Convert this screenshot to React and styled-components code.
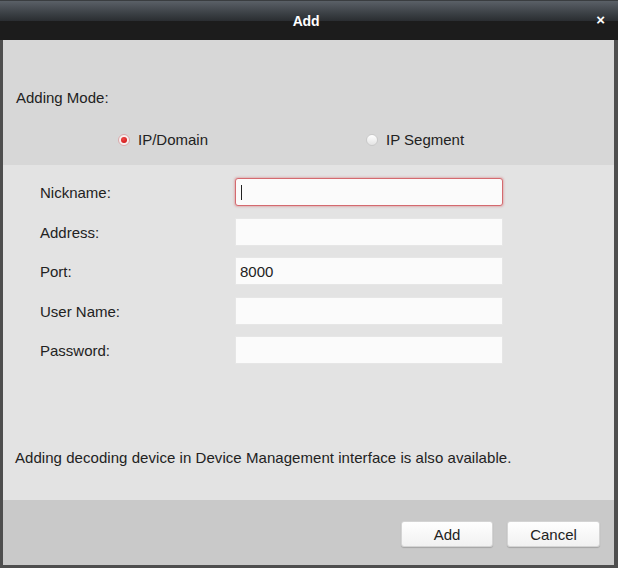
import React from 'react';
import styled, { createGlobalStyle } from 'styled-components';

const GlobalStyle = createGlobalStyle`
  html, body {
    margin: 0;
    padding: 0;
    background: #ffffff;
  }
  body {
    font-family: "Liberation Sans", Arial, sans-serif;
  }
`;

const Window = styled.div`
  width: 618px;
  height: 568px;
  box-sizing: border-box;
  display: flex;
  flex-direction: column;
  border: 3px solid #4e4e4e;
  border-right-width: 4px;
  border-top: none;
  background: #e3e3e3;
`;

const TitleBar = styled.div`
  height: 40px;
  margin: 0 -4px 0 -3px;
  padding-right: 6px;
  position: relative;
  display: flex;
  align-items: center;
  justify-content: center;
  background: linear-gradient(
    to bottom,
    #5a6067 0px,
    #3c4146 12px,
    #2a2d31 20px,
    #1c1c1c 20px,
    #1c1c1c 100%
  );
  border-top: 1px solid #3a3d40;
  box-sizing: border-box;
`;

const Title = styled.div`
  color: #ffffff;
  font-weight: bold;
  font-size: 14px;
  letter-spacing: -0.2px;
`;

const CloseButton = styled.div`
  position: absolute;
  right: 13px;
  top: 11px;
  color: #ffffff;
  font-weight: bold;
  font-size: 15px;
  line-height: 16px;
  cursor: pointer;
`;

const ModeSection = styled.div`
  height: 125px;
  box-sizing: border-box;
  background: #d7d7d7;
  padding: 50px 0 0 13px;
  display: flex;
  flex-direction: column;
`;

const Text = styled.div`
  color: #222222;
  font-size: 15px;
  line-height: 16px;
  padding-top: ${p => (p.shift ? `${p.shift}px` : '0')};
`;

const RadioRow = styled.div`
  display: flex;
  margin-top: 26px;
  padding-left: 102px;
`;

const RadioOption = styled.label`
  display: flex;
  align-items: center;
  gap: 8px;
  width: 250px;
  color: #222222;
  font-size: 15px;
  line-height: 16px;
  cursor: pointer;
`;

const RadioDot = styled.span`
  width: 12px;
  height: 12px;
  border-radius: 50%;
  box-sizing: border-box;
  display: flex;
  align-items: center;
  justify-content: center;
  background: ${p => (p.checked ? '#f7eeee' : 'linear-gradient(#ffffff, #e4e4e4)')};
  border: 1px solid ${p => (p.checked ? '#d9a9ab' : '#c9c9c9')};

  &::after {
    content: '';
    width: 6px;
    height: 6px;
    border-radius: 50%;
    background: radial-gradient(circle at 40% 35%, #f04848, #c80c0c);
    display: ${p => (p.checked ? 'block' : 'none')};
  }
`;

const FormSection = styled.div`
  flex: 1;
  padding: 13px 0 0 37px;
  display: flex;
  flex-direction: column;
`;

const Fields = styled.div`
  display: flex;
  flex-direction: column;
  gap: 11.5px;
`;

const FieldRow = styled.div`
  display: grid;
  grid-template-columns: 195px 268px;
  align-items: center;
`;

const Input = styled.input`
  height: 28px;
  box-sizing: border-box;
  padding: 0 4px;
  font-family: "Liberation Sans", Arial, sans-serif;
  font-size: 15px;
  color: #222222;
  background: #fbfbfb;
  border: 1px solid ${p => (p.focused ? '#d46a6f' : '#e6e6e6')};
  border-radius: ${p => (p.focused ? '3px' : '1px')};
  box-shadow: ${p => (p.focused ? '0 0 2px 1px rgba(214, 120, 124, 0.45)' : 'none')};
  outline: none;
`;

const Caret = styled.span`
  position: absolute;
  left: 6px;
  top: 7px;
  width: 1px;
  height: 15px;
  background: #222222;
`;

const InputWrap = styled.div`
  position: relative;
  display: flex;
  flex-direction: column;
`;

const Note = styled.div`
  margin-top: 86px;
  margin-left: -25px;
  color: #222222;
  font-size: 15px;
  line-height: 16px;
  letter-spacing: 0.05px;
`;

const Footer = styled.div`
  height: 65px;
  box-sizing: border-box;
  background: #c9c9c9;
  display: flex;
  justify-content: flex-end;
  align-items: flex-start;
  gap: 14px;
  padding: 21px 14px 0 0;
`;

const Button = styled.button`
  width: ${p => p.w}px;
  height: 26px;
  font-family: "Liberation Sans", Arial, sans-serif;
  font-size: 15px;
  color: #222222;
  background: linear-gradient(#ffffff, #f1f1f1);
  border: 1px solid #d4d4d4;
  border-radius: 3px;
  box-shadow: 0 1px 1px rgba(0, 0, 0, 0.18);
  cursor: pointer;
`;

const fields = [
  { label: 'Nickname:', value: '', focused: true },
  { label: 'Address:', value: '' },
  { label: 'Port:', value: '8000' },
  { label: 'User Name:', value: '' },
  { label: 'Password:', value: '' },
];

export default function App() {
  return (
    <>
      <GlobalStyle />
      <Window>
        <TitleBar>
          <Title>Add</Title>
          <CloseButton>×</CloseButton>
        </TitleBar>

        <ModeSection>
          <Text>Adding Mode:</Text>
          <RadioRow>
            <RadioOption>
              <RadioDot checked />
              IP/Domain
            </RadioOption>
            <RadioOption>
              <RadioDot />
              IP Segment
            </RadioOption>
          </RadioRow>
        </ModeSection>

        <FormSection>
          <Fields>
            {fields.map(f => (
              <FieldRow key={f.label}>
                <Text shift={2}>{f.label}</Text>
                <InputWrap>
                  <Input focused={f.focused} defaultValue={f.value} readOnly />
                  {f.focused && <Caret />}
                </InputWrap>
              </FieldRow>
            ))}
          </Fields>
          <Note>Adding decoding device in Device Management interface is also available.</Note>
        </FormSection>

        <Footer>
          <Button w={92}>Add</Button>
          <Button w={93}>Cancel</Button>
        </Footer>
      </Window>
    </>
  );
}
